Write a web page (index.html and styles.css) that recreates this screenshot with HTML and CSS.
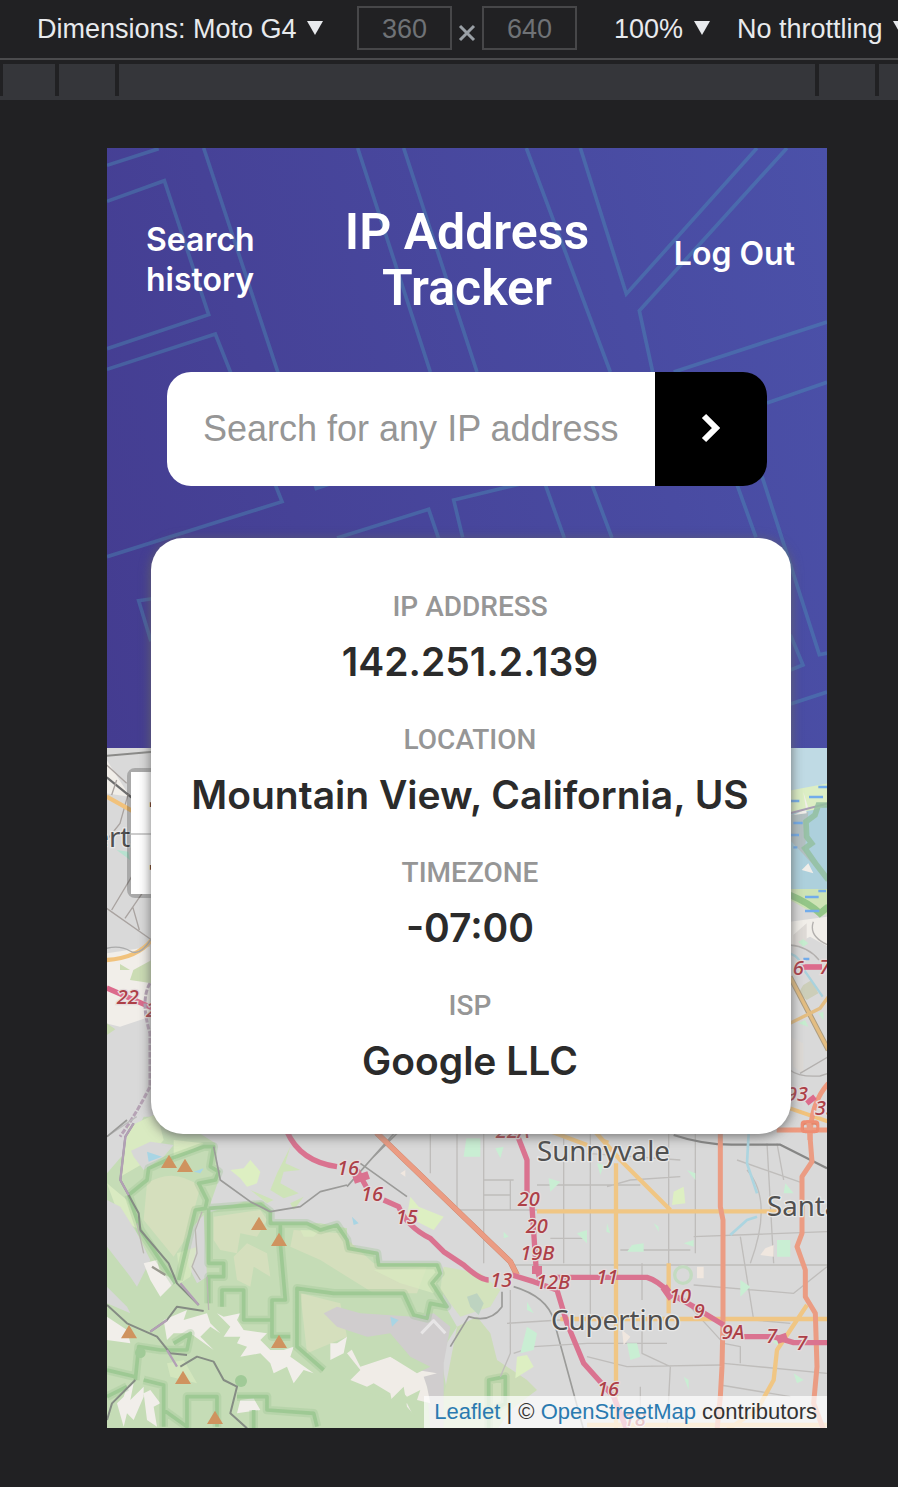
FILE: index.html
```html
<!DOCTYPE html>
<html lang="en">
<head>
<meta charset="utf-8">
<meta name="viewport" content="width=device-width, initial-scale=1">
<title>IP Address Tracker</title>
<link rel="stylesheet" href="styles.css">
</head>
<body>
<div class="toolbar">
  <label class="picker"><select class="picker-select" aria-label="Device"><option>Dimensions: Moto G4</option></select><svg class="caret" viewBox="0 0 16 14"><path d="M0 0H16L8 14Z"/></svg></label>
  <div class="size">
    <input class="size-input" type="text" placeholder="360" aria-label="Width">
    <svg class="times" viewBox="0 0 18 18"><path d="M2 2L16 16M16 2L2 16"/></svg>
    <input class="size-input" type="text" placeholder="640" aria-label="Height">
  </div>
  <label class="picker"><select class="picker-select" aria-label="Zoom"><option>100%</option></select><svg class="caret" viewBox="0 0 16 14"><path d="M0 0H16L8 14Z"/></svg></label>
  <label class="picker"><select class="picker-select" aria-label="Throttling"><option>No throttling</option></select><svg class="caret" viewBox="0 0 16 14"><path d="M0 0H16L8 14Z"/></svg></label>
</div>
<div class="ruler"><span></span><span></span><span></span><span></span><span></span></div>
<div class="stage">
  <main class="device">
    <header class="hero">
      <svg class="hero-pattern" viewBox="0 0 2160 1800" preserveAspectRatio="xMidYMin slice" aria-hidden="true">
        <path d="M0 52L155 2M0 160L172 98L305 500L0 602M0 664L325 558L525 1061L0 1226M290 0L628 1021L1080 870M752 0L970 672M890 0L1110 672M1258 0L1510 672M1420 0L1558 438L1950 0M2040 0L1597 488L1637 672M1700 672L2160 522M1980 765L2160 703M690 1170L965 1084L995 1172M1067 1168L1040 1056L1240 1008M150 1350L95 1358L132 1480M1315 1010L1372 1170M1455 1010L1515 1170M1890 1010L1947 1168M1965 985L2137 1520L2160 1515M2050 1460L2088 1551L2050 1566M2050 1668L2160 1632"/>
      </svg>
      <nav class="nav">
        <a class="nav-link" href="#history">Search history</a>
        <h1 class="title">IP Address Tracker</h1>
        <a class="nav-link nav-out" href="#logout">Log Out</a>
      </nav>
      <form class="search">
        <input class="search-input" type="text" placeholder="Search for any IP address" aria-label="IP address">
        <button class="search-button" type="button" aria-label="Search"><svg class="chevron" viewBox="0 0 20 30"><path d="M3 3L15 15L3 27"/></svg></button>
      </form>
    </header>
    <section class="map" aria-label="Map">
      <svg class="map-art" viewBox="0 0 2160 2040" preserveAspectRatio="xMidYMin slice">
        <rect width="2160" height="2040" fill="#d9d9d9"/>
        <!-- western edge -->
        <g transform="translate(-21 -24)" fill="none">
          <path d="M20 60L90 170L20 160ZM20 640L150 620V830L60 860L20 850Z" fill="#f1eee9"/>
          <path d="M100 690L155 660V730L90 720ZM60 672L90 690L60 690ZM20 850L46 868L20 886Z" fill="#cbdcb4"/>
          <path d="M50 330L85 335L90 360Z" fill="#b7e2d0"/>
          <path d="M20 47L160 35" stroke="#8a8a88" stroke-width="6"/>
          <path d="M20 112L110 185" stroke="#6d6d6d" stroke-width="7"/>
          <path d="M20 75L80 130M50 120L35 165M85 160L60 250L20 300M95 410L35 510M130 455L75 535M20 505L155 600M98 500L118 570" stroke="#a9a3a0" stroke-width="4"/>
          <path d="M20 170L110 220M20 660Q110 655 155 600" stroke="#f1c27c" stroke-width="13"/>
          <path d="M20 625Q60 615 90 633T155 595" stroke="#aaa" stroke-width="4"/>
          <path d="M20 744L160 805" stroke="#dc6b8c" stroke-width="16"/>
          <path d="M150 730Q120 780 150 880V1040Q110 1120 60 1190" stroke="#b6a3b5" stroke-width="9" stroke-dasharray="16 5"/>
          <path d="M20 1190L110 1130" stroke="#bbb" stroke-width="4"/>
          <text class="town" x="-20" y="322">erto</text>
          <text class="exit" x="50" y="792">22</text><text class="exit" x="138" y="830">2</text>
        </g>
        <!-- bay shore -->
        <g transform="translate(1929 -24)" fill="none">
          <path d="M100 20H235V450H100Z" fill="#add0dc"/>
          <path d="M100 20H235V130L170 150H100Z" fill="#bfdae4"/>
          <path d="M100 155L235 130V195L190 210L120 220Z" fill="#dceec4"/>
          <path d="M120 225L175 215L165 330L195 380L120 300Z" fill="#b3c0c2"/>
          <path d="M155 390L175 370L190 400ZM160 155L170 220L130 225L175 205Z" fill="#f1eee9"/>
          <path d="M110 447H235V520L210 530L120 480Z" fill="#cee3b5"/>
          <path d="M120 545L235 530V620L180 590L120 620Z" fill="#f1eee9"/>
          <path d="M120 220L180 204L235 190" stroke="#a9a0b5" stroke-width="6"/>
          <path d="M235 195H205L195 225L168 245L170 290L185 310L165 325L200 375L235 420" stroke="#93c0a0" stroke-width="17" opacity=".85"/>
          <path d="M120 465Q180 490 210 520L235 500" stroke="#94c688" stroke-width="20"/>
          <path d="M205 141H235M177 171H219M110 183H148M130 249H158M120 285H147M130 322H142M165 471H206M205 453H228M165 513H208M160 657H178" stroke="#72aceb" stroke-width="7"/>
          <path d="M130 585L170 550V600L130 630ZM120 890L160 910V1000L130 980Z" fill="#dedad6"/>
          <path d="M160 735L185 720L205 760L170 780L145 760Z" fill="#ccceb9"/>
          <path d="M145 605L160 598L175 610L160 620ZM205 820L220 815V840ZM145 850L165 840L175 860Z" fill="#c6eccf"/>
          <path d="M120 640Q150 650 162 690L218 770" stroke="#a9d2dd" stroke-width="7"/>
          <path d="M120 615Q175 620 207 660M190 545Q175 590 235 615M150 1000L235 950M120 990Q145 1012 210 1008L235 1000M100 770L120 775" stroke="#b3b0ae" stroke-width="4"/>
          <path d="M120 710L235 930" stroke="#ad9d80" stroke-width="16"/><path d="M120 710L235 930M120 850L210 805L235 770" stroke="#e3bd82" stroke-width="10"/>
          <path d="M120 1105L235 1145" stroke="#f1c27c" stroke-width="12"/>
          <path d="M158 681H216" stroke="#dc6b8c" stroke-width="17"/>
          <path d="M235 1030Q180 1090 180 1200M80 1170H235" stroke="#ee9a7f" stroke-width="15"/>
          <rect x="158" y="1151" width="45" height="25" rx="8" stroke="#e3886c" stroke-width="7"/>
          <path d="M170 1090L195 1070" stroke="#dc6b8c" stroke-width="17"/>
          <text class="exit" x="128" y="706">6</text><text class="exit" x="208" y="702">7</text><text class="exit" x="108" y="1082">93</text><text class="exit" x="195" y="1126">35</text>
        </g>
        <!-- hills, valley and street grid -->
        <g transform="translate(0 1116)" fill="none" stroke-linejoin="round">
          <path d="M0 160L60 90L110 -10H200L325 70L335 180L300 280L410 245H470L500 310H640L720 325V380L800 400L815 430H1000L1010 550L1050 620L1000 700L1040 930H0Z" fill="#c5dcb6"/>
          <path d="M40 170L65 20L150 -20L170 60L110 130ZM0 190L60 240L100 330L40 300ZM200 60L290 70L200 120Z" fill="#d9eac1"/>
          <path d="M72 92L130 65L200 75L170 110L110 150L80 110ZM0 240L40 260L90 340L130 420L90 500L70 470L0 380ZM240 340L290 285L300 470L270 490L245 440ZM0 500L60 560L70 580L0 550Z" fill="#d7d7d7"/>
          <path d="M120 190Q200 140 280 200L240 350L200 410L110 300ZM320 290L460 270L480 300L450 350L400 340L390 400L340 390L320 360ZM380 410L420 370L480 400L490 470L440 440L430 500L390 480ZM560 330L700 340L800 430L960 440L930 520L800 520L640 420L550 380ZM580 520L700 550L720 650L600 700Z" fill="#d5dfbd"/>
          <path d="M210 400L270 380L250 470L220 490ZM800 450L1000 440L980 520L880 490ZM180 730L230 720L270 790L190 770ZM580 330H640L620 350L590 350Z" fill="#d9eac1" opacity=".7"/>
          <path d="M110 430L150 420L160 460L210 480L160 530L130 480ZM0 590L60 630L70 670L0 660ZM170 600L240 570L230 600L300 580L310 610L340 640L310 620L280 650L290 660L320 690L250 640L200 640L180 660ZM330 580L350 590L400 580L390 600L410 630L480 640L460 660L490 690L530 690L560 680L550 710L620 760L590 750L560 790L540 740L500 760L490 730L460 700L400 710L420 680L390 670L400 650L350 650L370 620ZM30 850L50 830L60 800L80 790L70 840L110 800V830L80 900L60 880L50 920ZM110 820L130 810L160 850L140 860L150 920L120 900ZM400 840L440 835L460 870L390 880ZM670 670L690 670L720 650L710 700L670 720Z" fill="#f1eeea"/>
          <path d="M650 580L690 560L760 580L920 590L980 580L1030 620L1010 730L1010 930H970L960 800L910 720L780 650L690 620Z" fill="#d0cdce"/>
          <path d="M720 700L760 670L780 690L850 680L830 700L930 750L990 760L950 770L960 800L970 850L930 840L940 810L900 830L880 810L860 870L850 820L800 790L780 800L730 780L760 750ZM850 870L900 850L930 910L890 930Z" fill="#f0ece7"/>
          <path d="M720 660L850 640L910 710L970 740L930 760L850 710L760 740ZM720 830L780 850L790 820L850 840L890 800L900 860L960 930H720Z" fill="#c5dcb6"/>
          <path d="M1010 830L1050 620L1110 590L1150 640L1170 720L1260 780L1290 810L1210 870L1170 930H1010Z" fill="#ccdcb7"/>
          <path d="M1010 440L1120 460L1180 510L1150 560L1060 590L1000 510Z" fill="#d3e3bd"/>
          <path d="M1080 530L1110 520L1130 550L1115 585L1090 560Z" fill="#bdd3c0"/>
          <path d="M370 150L410 145L430 120L460 155L450 190L420 200L400 175ZM910 230L935 260L1010 290L980 330L940 310L900 290ZM1700 215L1730 200L1735 250L1695 255ZM1230 710L1260 705L1280 740L1225 775Z" fill="#ddefc2"/>
          <path d="M490 210L510 160L550 80L535 130L580 150L530 155L520 190L575 220L530 235ZM430 210L500 240L480 250ZM590 230L560 270L550 250Z" fill="#cee3b8"/>
          <path d="M65 225L120 180L125 145L180 120L290 80L320 80L310 140L335 155L325 180L275 190L300 240L295 265L265 270L215 480M205 490L100 330L65 225M305 265L460 253L490 275V310H520V370L535 540H495V600H410V510H345V560M305 265V430H350V470H305V550M495 310H600L640 330L690 315L720 360L725 385L810 400L815 435H990L1000 460L975 490L1020 560L970 550L960 595L920 585L890 520H725L680 520L570 505V680L650 750M495 600V650H550M85 780L95 680L160 690H240L250 640L200 670M110 780L170 795V920M170 870L240 920V830H330V920M390 830H480V870L620 880L630 920M440 930V870M0 750L85 770M0 830L60 800M1145 930V780L1195 770V850L1160 870" stroke="#97c58e" stroke-width="26" opacity=".3"/>
          <path d="M65 225L120 180L125 145L180 120L290 80L320 80L310 140L335 155L325 180L275 190L300 240L295 265L265 270L215 480M205 490L100 330L65 225M305 265L460 253L490 275V310H520V370L535 540H495V600H410V510H345V560M305 265V430H350V470H305V550M495 310H600L640 330L690 315L720 360L725 385L810 400L815 435H990L1000 460L975 490L1020 560L970 550L960 595L920 585L890 520H725L680 520L570 505V680L650 750M495 600V650H550M85 780L95 680L160 690H240L250 640L200 670M110 780L170 795V920M170 870L240 920V830H330V920M390 830H480V870L620 880L630 920M440 930V870M0 750L85 770M0 830L60 800M1145 930V780L1195 770V850L1160 870" stroke="#97c58e" stroke-width="11" opacity=".8"/>
          <circle cx="402" cy="783" r="18" fill="#a0ca97"/><circle cx="100" cy="698" r="16" fill="#a0ca97"/>
          <path d="M80 10L55 50L40 180L95 280L100 330L185 430L210 490L275 555M290 573L210 560L180 600L130 635M0 555L60 610L150 650L190 700L240 705M220 740L270 710L320 725L350 780L390 800L370 880L420 925M85 780L15 850L0 900" stroke="#858c84" stroke-width="6"/>
          <path d="M80 10L55 50L40 180L65 225M220 490L275 555M180 600L130 635M180 690L210 740" stroke="#b2a0b5" stroke-width="7"/>
          <path d="M135 440L175 465" stroke="#99998f" stroke-width="7"/>
          <path d="M285 275L265 330L270 400L255 440L280 480M300 470L305 570M90 310L110 400" stroke="#b9b6b0" stroke-width="4"/>
          <path d="M320 80L340 180L430 245L490 275L580 260L640 215L720 195M0 50L60 0M760 130L900 230M790 120L870 40M720 200L870 30M1185 515V560Q1150 610 1085 590L1030 680M1220 500Q1320 530 1340 600L1430 930" stroke="#9b9b99" stroke-width="5"/>
          <path d="M970 40V160M1050 40V270M1130 30V430M1210 180V270M1130 180H1220M1130 225H1210M1040 270H1290M1220 435H2160M1200 610L1360 600H1540M1210 510V700L1180 770M1370 40V430M1290 195H1600M1330 355H1440M1450 -20V610M1540 390H1750M1605 430V540M1685 30V580M1765 40V400M1440 670H1680M1605 600V700L1690 740L1680 930M1440 710L1560 740L1840 735M1760 350L2160 335M1920 150Q2000 240 1930 430M2010 70L2030 180M1980 70L2000 430M1890 120L2090 190M1760 495L2060 520L2160 440M1900 350L1940 600L2050 610M1850 730L2160 760M1840 795L2050 830M1600 800V930M1440 100L1720 120M1500 200L1570 180L1720 170M1220 700L1280 680L1440 670M1740 550L1850 670L1900 680V730" stroke="#bfbdbb" stroke-width="4"/>
          <path d="M1700 45Q1790 75 1880 74H2020L2160 145" stroke="#868685" stroke-width="7"/>
          <path d="M1925 40L1920 130L1950 220M1870 345L1920 300L1950 290" stroke="#acd5e0" stroke-width="8"/>
          <path d="M165 110L120 95L125 125ZM260 155L290 145L280 160ZM735 290L755 310L740 315ZM850 590L875 600L855 620Z" fill="#a8d5e4"/>
          <path d="M1078 55H1120V110H1070ZM1165 85L1190 80L1180 115ZM1325 175L1360 185L1330 215ZM1470 130L1490 135L1480 165ZM1740 150L1765 160V180ZM1575 375L1610 370V395H1560ZM1500 310L1510 340L1498 335ZM1640 310L1655 320V335ZM2010 360H2050V410H2010ZM2035 190L2060 220H2030ZM1730 370L1760 360V380ZM1900 480L1930 500L1900 530ZM1260 545L1280 580L1260 570ZM1260 620L1290 640L1280 690L1240 700ZM1560 670H1590L1600 710L1570 720ZM1730 770L1745 780V810ZM1410 340L1440 330V370ZM1190 335L1205 350L1190 355ZM2060 760L2090 780L2070 790ZM1995 665L2030 655L2020 680Z" fill="#c9eed3"/>
          <path d="M1770 440H1790V475H1770ZM1975 385L2000 375L2000 410L1960 405ZM1545 630L1570 650L1550 675ZM880 160L895 150V170Z" fill="#f0e7df"/>
          <circle cx="1728" cy="465" r="25" stroke="#c3dbc0" stroke-width="10"/>
          <path d="M1460 30L1540 120L1690 270M1527 130V930M1290 274H2060M1320 30L1440 75M1500 60L1490 90M1685 430V580M1360 597H2160M2100 555L2010 690L2000 780L1950 870L1860 930M1440 915H2160" stroke="#f0c684" stroke-width="13"/>
          <path d="M810 40L1210 425L1230 465" stroke="#c98169" stroke-width="17"/><path d="M805 35L1210 425L1230 465M1840 40V260L1848 300V600L1845 740L1840 830L1830 930M2105 0L2115 125L2085 170V340L2070 380L2095 450V530L2125 580L2130 740L2120 850L2150 930" stroke="#eb9c83" stroke-width="15"/>
          <rect x="2085" y="5" width="48" height="30" rx="8" stroke="#ee8e74" stroke-width="8"/>
          <path d="M540 35Q580 125 690 140M750 150L780 205M830 240L875 260Q900 320 970 355L1010 395L1070 435Q1120 480 1145 480M1225 30L1260 120V220M1275 260L1287 440L1300 480M1215 465L1280 485L1350 510L1380 610L1430 730L1520 830L1560 930M1350 472H1620Q1650 480 1690 520L1760 560L1850 615M1905 650H2000L2060 668H2160" stroke="#da7390" stroke-width="16"/>
          <path d="M740 180L785 165M1275 450H1305M1670 500L1695 535M2010 660L2040 650" stroke="#da7390" stroke-width="24"/>
          <path d="M943 640L980 602L1015 640" stroke="#e7e5e6" stroke-width="9"/>
          <path d="M186 104L210 144H162ZM234 116L258 156H210ZM456 290L480 330H432ZM516 338L540 378H492ZM66 615L90 655H42ZM228 752L252 792H204ZM516 644L540 684H492ZM324 872L348 912H300Z" fill="#cf935f"/>
          <g class="exit">
            <text x="690" y="165">16</text><text x="762" y="244">16</text><text x="866" y="313">15</text><text x="1166" y="55">22A</text><text x="1232" y="257">20</text><text x="1256" y="338">20</text><text x="1240" y="419">19B</text><text x="1150" y="502">13</text><text x="1287" y="508">12B</text><text x="1468" y="492">11</text><text x="1686" y="550">10</text><text x="1760" y="594">9</text><text x="1844" y="657">9A</text><text x="1978" y="670">7</text><text x="2068" y="690">7</text><text x="1470" y="827">16</text><text x="1550" y="918">18</text>
          </g>
          <g class="town"><text x="1290" y="124">Sunnyvale</text><text x="1980" y="287">Santa</text><text x="1332" y="630">Cupertino</text></g>
        </g>
      </svg>
      <div class="zoom"><button class="zoom-button" type="button" aria-label="Zoom in">+</button><button class="zoom-button" type="button" aria-label="Zoom out">−</button></div>
      <p class="credit"><a href="#leaflet">Leaflet</a> | © <a href="#osm">OpenStreetMap</a> contributors</p>
    </section>
    <dl class="card">
      <div class="fact"><dt>IP ADDRESS</dt><dd>142.251.2.139</dd></div>
      <div class="fact"><dt>LOCATION</dt><dd>Mountain View, California, US</dd></div>
      <div class="fact"><dt>TIMEZONE</dt><dd>-07:00</dd></div>
      <div class="fact"><dt>ISP</dt><dd>Google LLC</dd></div>
    </dl>
  </main>
</div>
</body>
</html>
```
FILE: styles.css
```css
* { box-sizing: border-box; }
body { margin: 0; background: #212123; font-family: "Liberation Sans", Arial, sans-serif; overflow-x: hidden; }

.toolbar { display: flex; align-items: center; height: 60px; padding: 0 0 2px 37px; border-bottom: 2px solid #4b4b4d; color: #e8eaed; overflow: hidden; }
.picker { display: flex; flex: none; align-items: center; gap: 10px; margin-right: 27px; }
.picker-select { appearance: none; border: 0; padding: 2px 0 0; background: none; color: inherit; font: 27px/32px "Liberation Sans", Arial, sans-serif; }
.caret { width: 16px; height: 14px; fill: #e8eaed; }
.size { display: flex; flex: none; align-items: center; gap: 6px; margin: 0 37px 0 7px; }
.size-input { width: 95px; height: 44px; padding: 2px 0 0; border: 2px solid #474749; background: none; color: #e8eaed; font: 27px/32px "Liberation Sans", Arial, sans-serif; text-align: center; }
.size-input::placeholder { color: #6f7276; opacity: 1; }
.times { width: 18px; height: 18px; margin-top: 10px; fill: none; stroke: #9aa0a6; stroke-width: 3; }

.ruler { display: grid; grid-template-columns: 52px 56px minmax(0, 1fr) 56px 19px; gap: 4px; height: 36px; margin-top: 4px; padding-left: 3px; background: linear-gradient(#212123 32px, #35363a 32px); }
.ruler span { height: 32px; background: #35363a; }

.stage { padding: 48px 71px 59px 107px; }
.device { position: relative; }

.hero { position: relative; min-height: 600px; padding-top: 56px; background: linear-gradient(75deg, #443c90, #4b51a9); font-family: Roboto, sans-serif; }
.hero-pattern { position: absolute; inset: 0; width: 100%; height: 100%; fill: none; stroke: #4ba3bb; stroke-opacity: .33; stroke-width: 11; }
.nav { position: relative; display: grid; grid-template-columns: 120px minmax(0, 1fr) 127px; align-items: center; padding: 0 32px 0 39px; }
.nav-link { color: #fff; font: 600 32px/40px Inter, sans-serif; text-decoration: none; }
.nav-out { padding-bottom: 12px; text-align: right; white-space: nowrap; }
.title { width: 260px; margin: 0 auto; color: #fff; font-size: 50px; line-height: 56px; font-weight: 600; text-align: center; }
.search { position: relative; display: flex; height: 114px; margin: 56px 60px 0; border-radius: 24px; overflow: hidden; }
.search-input { flex: 1; min-width: 0; padding: 0 0 0 36px; border: 0; background: #fff; font: 36px/44px "Liberation Sans", Arial, sans-serif; }
.search-input::placeholder { color: #969696; opacity: 1; }
.search-button { display: flex; width: 112px; padding: 0 0 2px; border: 0; align-items: center; justify-content: center; background: #000; }
.chevron { width: 20px; height: 30px; fill: none; stroke: #fff; stroke-width: 6; }

.map { position: relative; height: 680px; overflow: hidden; background: #d9d9d9; }
.map-art { display: block; width: 100%; height: 100%; }
.town { fill: #505050; stroke: #e8e8e8; stroke-width: 8px; paint-order: stroke; font: 83px "Noto Sans", sans-serif; }
.exit { fill: #ad4048; stroke: #e6dcdc; stroke-width: 8px; paint-order: stroke; font: italic 500 60px "Noto Sans", sans-serif; }
.zoom { position: absolute; top: 20px; left: 20px; display: flex; flex-direction: column; border: 4px solid rgba(0, 0, 0, .22); border-radius: 8px; background-clip: padding-box; }
.zoom-button { width: 60px; height: 61px; padding: 4px 0 0; border: 0; background: #fff; color: #000; font: bold 44px/56px "Liberation Sans", Arial, sans-serif; }
.zoom-button + .zoom-button { border-top: 2px solid #ccc; }
.credit { position: absolute; right: 0; bottom: 0; margin: 0; padding: 0 10px; background: rgba(255, 255, 255, .7); color: #333; font-size: 22px; line-height: 32px; white-space: nowrap; }
.credit a { color: #2a7ab0; text-decoration: none; }

.card { position: absolute; top: 390px; left: 44px; right: 36px; display: flex; flex-direction: column; gap: 32px; margin: 0; padding: 50px 18px 46px 16px; border-radius: 32px; background: #fff; box-shadow: 0 2px 12px rgba(100, 100, 100, .9); font-family: Roboto, sans-serif; font-weight: 500; text-align: center; }
.fact dt { color: #969696; font-size: 28px; line-height: 38px; }
.fact dd { margin: 8px 0 0; color: #2b2b2b; font: 600 39px/55px Inter, sans-serif; white-space: nowrap; }
```
